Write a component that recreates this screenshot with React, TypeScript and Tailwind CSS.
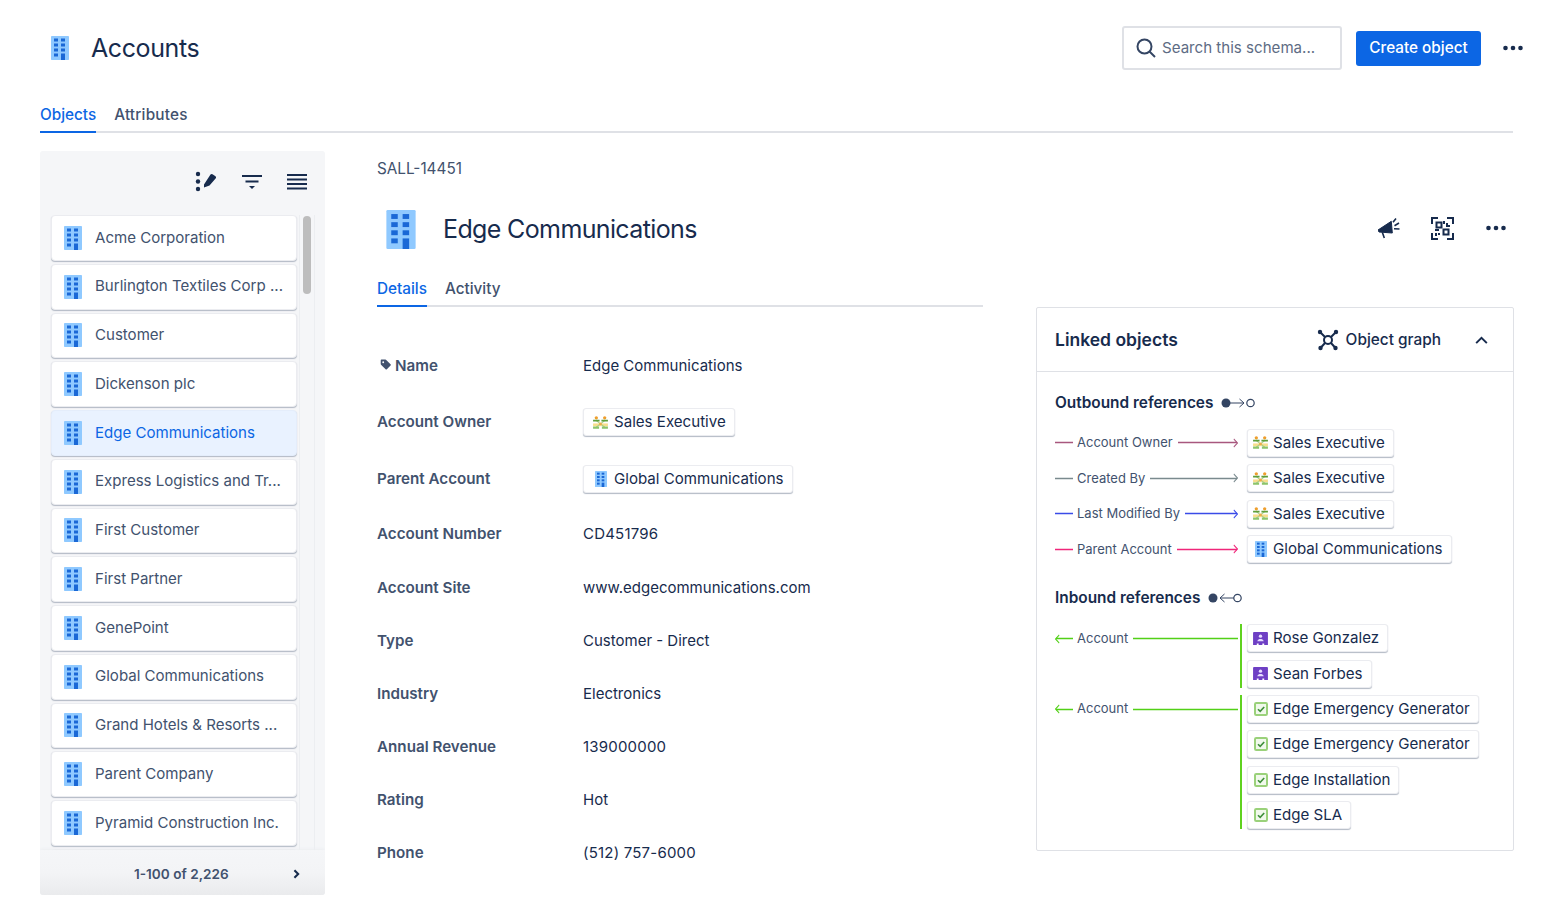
import React from "react";

const Building = ({ className = "" }: { className?: string }) => (
  <svg viewBox="0 0 18 24" className={className} aria-hidden="true">
    <rect x="0" y="0" width="18" height="24" rx="0.8" fill="#8fc9ff" />
    <g fill="#1a68d6">
      <rect x="3" y="2.5" width="4" height="3" />
      <rect x="10" y="2.5" width="4" height="3" />
      <rect x="3" y="7.5" width="4" height="3" />
      <rect x="10" y="7.5" width="4" height="3" />
      <rect x="3" y="12.5" width="4" height="3" />
      <rect x="10" y="12.5" width="4" height="3" />
      <rect x="3" y="17.5" width="4" height="3" />
      <rect x="10" y="17.5" width="4" height="6.5" />
    </g>
  </svg>
);

const People = () => (
  <svg viewBox="0 0 16 14" className="w-[15px] h-[13px]" aria-hidden="true">
    <rect x="0" y="8" width="16" height="3" fill="#f8dd8c" />
    <path d="M3.500 5l9 7M12.500 5l-9 7" stroke="#a7cf8a" strokeWidth="1.300" />
    <circle cx="3.500" cy="2" r="1.800" fill="#ee9f2e" />
    <circle cx="12.500" cy="2" r="1.800" fill="#ee9f2e" />
    <path d="M0 5h7M9 5h7" stroke="#5f9e3a" strokeWidth="1.800" />
    <circle cx="8" cy="8.500" r="1.500" fill="#f2ac46" />
    <path d="M0 12.500h6.500M9.500 12.500H16" stroke="#8cc46a" strokeWidth="2.400" />
  </svg>
);

const Person = () => (
  <svg viewBox="0 0 16 14" className="w-[15px] h-[13px]" aria-hidden="true">
    <path d="M1 0h14a1 1 0 0 1 1 1v13h-4v-1.500h-2V14H6v-1.500H4V14H0V1a1 1 0 0 1 1-1z" fill="#6e3fc4" />
    <circle cx="8" cy="4.500" r="1.800" fill="#e6dcff" />
    <path d="M4.500 10c.5-2 2-2.500 3.500-2.500s3 .5 3.500 2.500z" fill="#e6dcff" />
  </svg>
);

const Check = () => (
  <svg viewBox="0 0 14 14" className="w-[14px] h-[14px]" aria-hidden="true">
    <rect x="1" y="1" width="12" height="12" rx="1.200" fill="#f1f9ec" stroke="#9ad17a" strokeWidth="2" />
    <path d="M4 7.200l2.200 2.200L10.200 5" fill="none" stroke="#3f8f3a" strokeWidth="1.600" />
  </svg>
);

const SmallBuilding = () => <Building className="w-[12px] h-[16px]" />;

const Dots = () => (
  <svg viewBox="0 0 20 6" className="w-[20px] h-[6px]" aria-hidden="true">
    <circle cx="2.500" cy="3" r="2.300" fill="#172b4d" />
    <circle cx="10" cy="3" r="2.300" fill="#172b4d" />
    <circle cx="17.500" cy="3" r="2.300" fill="#172b4d" />
  </svg>
);

type IconKind = "people" | "building" | "person" | "check";
const chipIcon = (k: IconKind) =>
  k === "people" ? <People /> : k === "building" ? <SmallBuilding /> : k === "person" ? <Person /> : <Check />;

const Chip = ({ icon, label, wide = false }: { icon: IconKind; label: string; wide?: boolean }) => (
  <div
    className={`inline-flex items-center h-[28px] pr-[8px] rounded-[3px] bg-white border border-[#ebecf0] shadow-[0_1px_1px_#b3bac5] text-[15.100px] text-[#172b4d] w-fit whitespace-nowrap ${
      wide ? "pl-[9px] gap-[6px]" : "pl-[5px] gap-[5px]"
    }`}
  >
    <span className="w-[15px] flex justify-center">{chipIcon(icon)}</span>
    <span className="pt-[1px]">{label}</span>
  </div>
);

const accounts = [
  "Acme Corporation",
  "Burlington Textiles Corp ...",
  "Customer",
  "Dickenson plc",
  "Edge Communications",
  "Express Logistics and Tr...",
  "First Customer",
  "First Partner",
  "GenePoint",
  "Global Communications",
  "Grand Hotels & Resorts ...",
  "Parent Company",
  "Pyramid Construction Inc.",
  "",
];

const Sidebar = () => (
  <aside className="w-[285px] h-[744px] shrink-0 bg-[#f5f6f8] rounded-[3px] flex flex-col overflow-hidden">
    <div className="h-[64px] shrink-0 flex items-center justify-end pr-[18px] pb-[3px] gap-[25px]">
      <svg viewBox="0 0 22 22" className="w-[22px] h-[22px]" aria-hidden="true">
        <circle cx="3" cy="3" r="2.200" fill="#172b4d" />
        <circle cx="3" cy="10.500" r="2.200" fill="#172b4d" />
        <circle cx="3" cy="18" r="2.200" fill="#172b4d" />
        <path d="M9 13.500L15.500 3.500a1.500 1.500 0 0 1 2-.3l3 2a1.500 1.500 0 0 1 .3 2L14.500 14.500l-5.500 2z" fill="#172b4d" />
      </svg>
      <svg viewBox="0 0 20 14" className="w-[20px] h-[14px]" aria-hidden="true">
        <rect x="0" y="0" width="20" height="2" fill="#172b4d" />
        <rect x="3.500" y="5.500" width="13" height="2" fill="#172b4d" />
        <path d="M7 11h6l-3 3z" fill="#172b4d" />
      </svg>
      <svg viewBox="0 0 20 16" className="w-[20px] h-[16px]" aria-hidden="true">
        <g fill="#172b4d">
          <rect y="0" width="20" height="2" />
          <rect y="4.500" width="20" height="2" />
          <rect y="9" width="20" height="2" />
          <rect y="13.500" width="20" height="2" />
        </g>
      </svg>
    </div>
    <div className="flex-1 min-h-0 flex pl-[11px] overflow-hidden">
      <ul className="w-[246px] shrink-0 flex flex-col gap-[3px]">
        {accounts.map((a, i) => (
          <li
            key={i}
            className={`h-[45.750px] shrink-0 flex items-center pl-[12px] gap-[13px] rounded-[4px] border shadow-[0_1px_1px_#b3bac5] text-[15.050px] whitespace-nowrap ${
              a === "Edge Communications"
                ? "bg-[#e9f2ff] border-[#e4edfb] text-[#0c66e4]"
                : "bg-white border-[#ebecf0] text-[#42526e]"
            }`}
          >
            {a && <Building className="w-[18px] h-[24px]" />}
            <span>{a}</span>
          </li>
        ))}
      </ul>
      <div className="ml-[2px] w-[16px] border-x border-[#eceef1] h-full flex justify-center">
        <div className="w-[8px] h-[78px] bg-[#bdbdbd] rounded-full mt-[1px]" />
      </div>
    </div>
    <div className="h-[45px] shrink-0 bg-gradient-to-b from-[#f5f6f8] via-[#f3f4f6] to-[#eaebed] flex items-center pt-[3px] shadow-[0_-1px_3px_#eceef1]">
      <span className="ml-[94px] text-[13.600px] font-semibold text-[#42526e]">1-100 of 2,226</span>
      <svg viewBox="0 0 8 12" className="ml-[64px] w-[7px] h-[10px]" aria-hidden="true">
        <path d="M1.500 1.500L6 6l-4.500 4.500" fill="none" stroke="#172b4d" strokeWidth="2.500" />
      </svg>
    </div>
  </aside>
);

const rows: { label: string; value?: string; chip?: IconKind; h: number; tag?: boolean; num?: boolean }[] = [
  { label: "Name", value: "Edge Communications", h: 55, tag: true },
  { label: "Account Owner", chip: "people", h: 57 },
  { label: "Parent Account", chip: "building", h: 57 },
  { label: "Account Number", value: "CD451796", h: 54, num: true },
  { label: "Account Site", value: "www.edgecommunications.com", h: 53 },
  { label: "Type", value: "Customer - Direct", h: 53 },
  { label: "Industry", value: "Electronics", h: 53 },
  { label: "Annual Revenue", value: "139000000", h: 53, num: true },
  { label: "Rating", value: "Hot", h: 53 },
  { label: "Phone", value: "(512) 757-6000", h: 54, num: true },
];

const Details = () => (
  <section className="w-[606px] shrink-0 ml-[52px] flex flex-col">
    <div className="text-[15.300px] leading-[20px] text-[#42526e] mt-[8px]">SALL-14451</div>
    <div className="flex items-center h-[40px] mt-[30px]">
      <Building className="w-[30px] h-[39px] ml-[9px]" />
      <h2 className="ml-[27px] pt-[2px] text-[25px] tracking-[-0.630px] text-[#172b4d] whitespace-nowrap">Edge Communications</h2>
    </div>
    <div className="flex gap-[18px] mt-[19px] border-b-2 border-[#dfe1e6] h-[39px] items-start text-[15.300px] font-medium pt-[10px]">
      <span className="text-[#0c66e4] h-[29px] border-b-2 border-[#0c66e4]">Details</span>
      <span className="text-[#42526e]">Activity</span>
    </div>
    <dl className="mt-[31.500px]">
      {rows.map((r) => (
        <div key={r.label} className="flex items-center" style={{ height: r.h }}>
          <dt className="w-[206px] text-[15.200px] font-semibold text-[#42526e] flex items-center gap-[4px]">
            {r.tag && (
              <svg viewBox="0 0 12 12" className="w-[11px] h-[11px] ml-[3px] -mt-[2px]" aria-hidden="true">
                <path d="M1.500 0.500h4.300a1 1 0 0 1 .7.300l5 5a1 1 0 0 1 0 1.400l-4 4a1 1 0 0 1-1.400 0l-5-5a1 1 0 0 1-.3-.7V1.500a1 1 0 0 1 .7-1z" fill="#42526e" />
                <circle cx="3.500" cy="3.500" r="1" fill="#fff" />
              </svg>
            )}
            {r.label}
          </dt>
          <dd className={`text-[15px] text-[#172b4d] ${r.num ? "tracking-[0.200px]" : ""}`}>
            {r.value ?? (
              <Chip wide icon={r.chip as IconKind} label={r.chip === "people" ? "Sales Executive" : "Global Communications"} />
            )}
          </dd>
        </div>
      ))}
    </dl>
  </section>
);

const Arrow = ({ color, dir = "right", className = "" }: { color: string; dir?: "right" | "left"; className?: string }) => (
  <svg viewBox="0 0 10 10" className={`w-[6px] h-[10px] shrink-0 ${className}`} preserveAspectRatio="none" aria-hidden="true">
    <path d={dir === "right" ? "M3 1l6 4-6 4" : "M7 1L1 5l6 4"} fill="none" stroke={color} strokeWidth="1.500" />
  </svg>
);

const OutRow = ({ label, color, icon, target }: { label: string; color: string; icon: IconKind; target: string }) => (
  <div className="flex items-center h-[35.500px]">
    <div className="w-[192px] shrink-0 flex items-center pr-[9px]">
      <div className="w-[18px] h-px shrink-0 scale-y-150" style={{ background: color }} />
      <span className="ml-[4px] mr-[5px] text-[13px] text-[#42526e] whitespace-nowrap">{label}</span>
      <div className="flex-1 h-px scale-y-150" style={{ background: color }} />
      <Arrow color={color} className="-ml-[5px]" />
    </div>
    <Chip icon={icon} label={target} />
  </div>
);

const InGroup = ({ chips }: { chips: { icon: IconKind; label: string }[] }) => (
  <div className="flex">
    <div className="w-[185px] shrink-0 h-[29px] flex items-center pr-[2px]">
      <Arrow color="#52d017" dir="left" className="-mr-[5px]" />
      <div className="w-[17px] h-px bg-[#52d017] shrink-0 scale-y-150" />
      <span className="ml-[4px] mr-[5px] text-[13px] text-[#42526e]">Account</span>
      <div className="flex-1 h-px bg-[#52d017] scale-y-150" />
    </div>
    <div className="border-l-2 border-[#5fd21f] pl-[5px] flex flex-col gap-[7.500px]">
      {chips.map((c, i) => (
        <Chip key={i} {...c} />
      ))}
    </div>
  </div>
);

const Linked = () => (
  <section className="w-[478px] h-[544px] mt-[67px] shrink-0 border border-[#dfe1e6] rounded-[2px] flex flex-col">
    <div className="h-[64px] shrink-0 border-b border-[#dfe1e6] flex items-center pl-[18px] pr-[25px]">
      <h3 className="pt-[2px] text-[17.500px] font-semibold text-[#172b4d]">Linked objects</h3>
      <svg viewBox="0 0 22 22" className="ml-auto w-[22px] h-[22px]" aria-hidden="true">
        <g stroke="#172b4d" strokeWidth="2" fill="none">
          <path d="M3 3l5 5M19 3l-5 5M3.500 19l4.500-5M18.500 19l-4.500-5" />
          <circle cx="11" cy="11" r="4" />
        </g>
        <g fill="#172b4d">
          <circle cx="3" cy="3" r="2.200" />
          <circle cx="19" cy="3" r="2.200" />
          <circle cx="3.500" cy="19" r="2.200" />
          <circle cx="18.500" cy="19" r="2.200" />
        </g>
      </svg>
      <span className="ml-[7px] pt-[1px] text-[15.400px] font-medium text-[#172b4d]">Object graph</span>
      <svg viewBox="0 0 14 9" className="ml-[34px] w-[13px] h-[8px]" aria-hidden="true">
        <path d="M1 8l6-6 6 6" fill="none" stroke="#172b4d" strokeWidth="2.200" />
      </svg>
    </div>
    <div className="pl-[18px] pt-[21px]">
      <div className="flex items-center h-[20px] gap-[8px] text-[15.400px] font-semibold text-[#172b4d]">
        Outbound references
        <svg viewBox="0 0 34 12" className="w-[34px] h-[12px]" aria-hidden="true">
          <circle cx="5" cy="6" r="4.500" fill="#344563" />
          <path d="M9 6h14M18.500 2l4.500 4-4.500 4" fill="none" stroke="#344563" strokeWidth="1" />
          <circle cx="29.500" cy="6" r="3.700" fill="none" stroke="#344563" strokeWidth="1.200" />
        </svg>
      </div>
      <div className="mt-[12px]">
        <OutRow label="Account Owner" color="#a8577e" icon="people" target="Sales Executive" />
        <OutRow label="Created By" color="#7a8a8e" icon="people" target="Sales Executive" />
        <OutRow label="Last Modified By" color="#3a4be8" icon="people" target="Sales Executive" />
        <OutRow label="Parent Account" color="#f0267a" icon="building" target="Global Communications" />
      </div>
      <div className="flex items-center h-[20px] gap-[8px] mt-[21px] text-[15.400px] font-semibold text-[#172b4d]">
        Inbound references
        <svg viewBox="0 0 34 12" className="w-[34px] h-[12px]" aria-hidden="true">
          <circle cx="5" cy="6" r="4.500" fill="#344563" />
          <path d="M26 6H12M16.500 2L12 6l4.500 4" fill="none" stroke="#344563" strokeWidth="1" />
          <circle cx="29.500" cy="6" r="3.700" fill="none" stroke="#344563" strokeWidth="1.200" />
        </svg>
      </div>
      <div className="mt-[16px] flex flex-col gap-[7px]">
        <InGroup chips={[{ icon: "person", label: "Rose Gonzalez" }, { icon: "person", label: "Sean Forbes" }]} />
        <InGroup
          chips={[
            { icon: "check", label: "Edge Emergency Generator" },
            { icon: "check", label: "Edge Emergency Generator" },
            { icon: "check", label: "Edge Installation" },
            { icon: "check", label: "Edge SLA" },
          ]}
        />
      </div>
    </div>
  </section>
);

const Actions = () => (
  <div className="mt-[65px] h-[24px] flex items-center justify-end pr-[8px]">
    <svg viewBox="0 0 22 21" className="w-[22px] h-[21px]" aria-hidden="true">
      <path d="M0 12L13.300 3.300 14.300 15 1 14z" fill="#172b4d" stroke="#172b4d" strokeWidth="1" strokeLinejoin="round" />
      <path d="M15 4.300L18 0.500M16.500 7.700l4.500-2.700M16 10.700l5.500.3M4.300 14.300l2 5.700" fill="none" stroke="#172b4d" strokeWidth="1.600" />
    </svg>
    <svg viewBox="0 0 23 23" className="ml-[31px] w-[23px] h-[23px]" aria-hidden="true">
      <g fill="none" stroke="#172b4d" strokeWidth="2">
        <path d="M7 1H1v6M16 1h6v6M1 16v6h6M22 16v6h-6" />
        <rect x="5.500" y="5.500" width="5" height="5" />
        <rect x="12.500" y="12.500" width="5" height="5" />
        <path d="M13 4v3M16 6v3h3M4 13h4M5 16v3M8 16v2" />
      </g>
    </svg>
    <span className="ml-[32px] flex"><Dots /></span>
  </div>
);

export default function App() {
  return (
    <div className="w-[1567px] h-[900px] overflow-hidden bg-white flex flex-col font-['Inter',sans-serif]">
      <header className="h-[96px] shrink-0 flex items-center pl-[51px] pr-[44px]">
        <Building className="w-[18px] h-[24px]" />
        <h1 className="ml-[22px] pt-[2px] text-[25px] tracking-[-0.400px] text-[#172b4d]">Accounts</h1>
        <div className="ml-auto w-[220px] h-[44px] border-2 border-[#dfe1e6] rounded-[3px] flex items-center pl-[12px] gap-[6px] text-[15.100px] text-[#5e6c84]">
          <svg viewBox="0 0 20 20" className="w-[20px] h-[20px]" aria-hidden="true">
            <circle cx="8.500" cy="8.500" r="7" fill="none" stroke="#344563" strokeWidth="2" />
            <path d="M13.500 13.500L19 19" stroke="#344563" strokeWidth="2" />
          </svg>
          Search this schema...
        </div>
        <button className="ml-[14px] w-[125px] h-[35px] bg-[#0c66e4] rounded-[3px] text-white text-[15.300px] font-medium">Create object</button>
        <span className="ml-[22px] flex"><Dots /></span>
      </header>
      <nav className="mx-[40px] w-[1473px] h-[37px] shrink-0 border-b-2 border-[#dfe1e6] flex gap-[18px] text-[15.300px] font-medium pt-[8px]">
        <span className="text-[#0c66e4] h-[29px] border-b-2 border-[#0c66e4]">Objects</span>
        <span className="text-[#42526e] tracking-[0.200px]">Attributes</span>
      </nav>
      <main className="flex pl-[40px] pt-[18px] min-h-0 flex-1 items-start">
        <Sidebar />
        <Details />
        <div className="ml-[53px] w-[478px] shrink-0 flex flex-col">
          <Actions />
          <Linked />
        </div>
      </main>
    </div>
  );
}
